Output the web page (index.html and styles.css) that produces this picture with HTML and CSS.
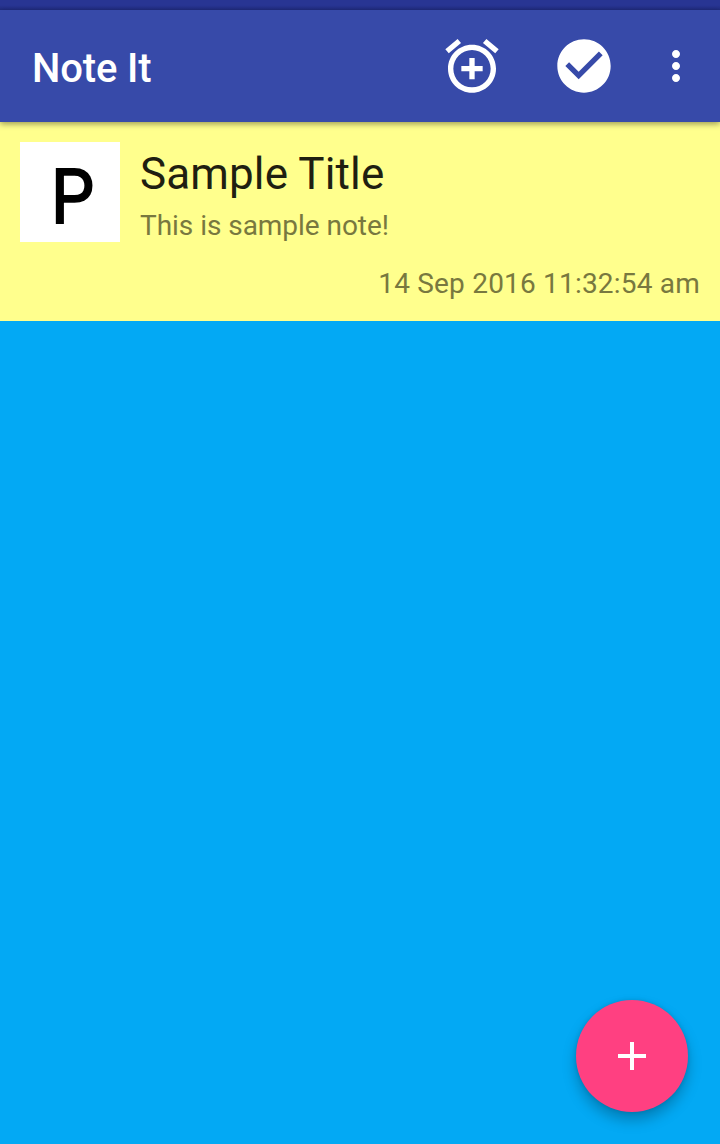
FILE: index.html
```html
<!DOCTYPE html>
<html lang="en">
<head>
<meta charset="utf-8">
<title>Note It</title>
<link rel="stylesheet" href="styles.css">
</head>
<body>
<div class="app">
  <div class="status-bar"></div>
  <header class="toolbar">
    <h1 class="toolbar-title">Note It</h1>
    <button class="action" aria-label="Add reminder">
      <svg class="action-icon" viewBox="0 0 24 24"><path d="M7.88 3.39 6.6 1.86 2 5.71l1.29 1.53 4.59-3.85zM22 5.72l-4.6-3.86-1.29 1.53 4.6 3.86L22 5.72zM12 4c-4.97 0-9 4.03-9 9s4.02 9 9 9c4.97 0 9-4.03 9-9s-4.03-9-9-9zm0 16c-3.87 0-7-3.13-7-7s3.13-7 7-7 7 3.13 7 7-3.13 7-7 7zm1-11h-2v3H8v2h3v3h2v-3h3v-2h-3V9z"/></svg>
    </button>
    <button class="action" aria-label="Done">
      <svg class="action-icon" viewBox="0 0 24 24"><path d="M12 2C6.48 2 2 6.48 2 12s4.48 10 10 10 10-4.48 10-10S17.52 2 12 2zm-2 15-5-5 1.41-1.41L10 14.17l7.59-7.59L19 8l-9 9z"/></svg>
    </button>
    <button class="overflow" aria-label="More options">
      <svg class="overflow-icon" viewBox="0 0 24 24"><path d="M12 8c1.1 0 2-.9 2-2s-.9-2-2-2-2 .9-2 2 .9 2 2 2zm0 2c-1.1 0-2 .9-2 2s.9 2 2 2 2-.9 2-2-.9-2-2-2zm0 6c-1.1 0-2 .9-2 2s.9 2 2 2 2-.9 2-2-.9-2-2-2z"/></svg>
    </button>
  </header>
  <main class="notes">
    <article class="note">
      <div class="note-main">
        <div class="note-badge"><span class="note-letter">P</span></div>
        <div class="note-text">
          <h2 class="note-title">Sample Title</h2>
          <p class="note-body">This is sample note!</p>
        </div>
      </div>
      <time class="note-date">14 Sep 2016 11:32:54 am</time>
    </article>
  </main>
  <button class="fab" aria-label="Add note">
    <svg class="fab-icon" viewBox="0 0 24 24"><path d="M19 13h-6v6h-2v-6H5v-2h6V5h2v6h6v2z"/></svg>
  </button>
</div>
</body>
</html>
```
FILE: styles.css
```css
* { box-sizing: border-box; }

body {
  margin: 0;
  font-family: Roboto, sans-serif;
}

button {
  padding: 0;
  border: 0;
  background: none;
}

h1, h2, p { margin: 0; }

.app {
  position: relative;
  display: flex;
  flex-direction: column;
  height: 1144px;
  overflow: hidden;
  background: #03a9f4;
}

.status-bar {
  height: 10px;
  background: linear-gradient(#283593 55%, #202c80);
}

.toolbar {
  z-index: 1;
  display: flex;
  align-items: center;
  height: 112px;
  padding-left: 32px;
  background: #374aa9;
  box-shadow: 0 2px 6px rgba(0, 0, 0, 0.4);
}

.toolbar-title {
  flex: 1;
  padding-top: 6px;
  color: #fff;
  font-size: 40px;
  font-weight: 500;
  letter-spacing: -0.15px;
  line-height: 48px;
}

.action {
  display: flex;
  justify-content: center;
  width: 112px;
}

.action-icon {
  width: 64px;
  height: 64px;
  fill: #fff;
}

.overflow {
  display: flex;
  padding-left: 12px;
  width: 80px;
}

.overflow-icon {
  width: 48px;
  height: 48px;
  fill: #fff;
}

.note {
  display: flex;
  flex-direction: column;
  height: 199px;
  padding: 20px;
  background: #ffff8d;
}

.note-main {
  display: flex;
  gap: 20px;
}

.note-badge {
  display: flex;
  align-items: center;
  justify-content: center;
  width: 100px;
  height: 100px;
  background: #fff;
}

.note-letter {
  padding: 10px 0 0 6px;
  color: #000;
  font-size: 76px;
  line-height: 92px;
  transform: scaleX(0.9);
  -webkit-text-stroke: 1.8px #000;
}

.note-text { padding-top: 6px; }

.note-title {
  color: #1f1f11;
  font-size: 44px;
  font-weight: 400;
  letter-spacing: 0.13px;
  line-height: 52px;
}

.note-body {
  padding-top: 9px;
  color: #78783f;
  font-size: 28px;
  letter-spacing: -0.04px;
  line-height: 34px;
}

.note-date {
  align-self: flex-end;
  padding-top: 24px;
  color: #78783f;
  font-size: 28px;
  letter-spacing: 0.2px;
  line-height: 34px;
}

.fab {
  position: absolute;
  right: 32px;
  bottom: 32px;
  display: flex;
  align-items: center;
  justify-content: center;
  width: 112px;
  height: 112px;
  border-radius: 50%;
  background: #ff4081;
  box-shadow: 0 8px 14px rgba(0, 0, 0, 0.25), 0 0 4px rgba(0, 0, 0, 0.12);
}

.fab-icon {
  width: 48px;
  height: 48px;
  fill: #fff;
}
```
